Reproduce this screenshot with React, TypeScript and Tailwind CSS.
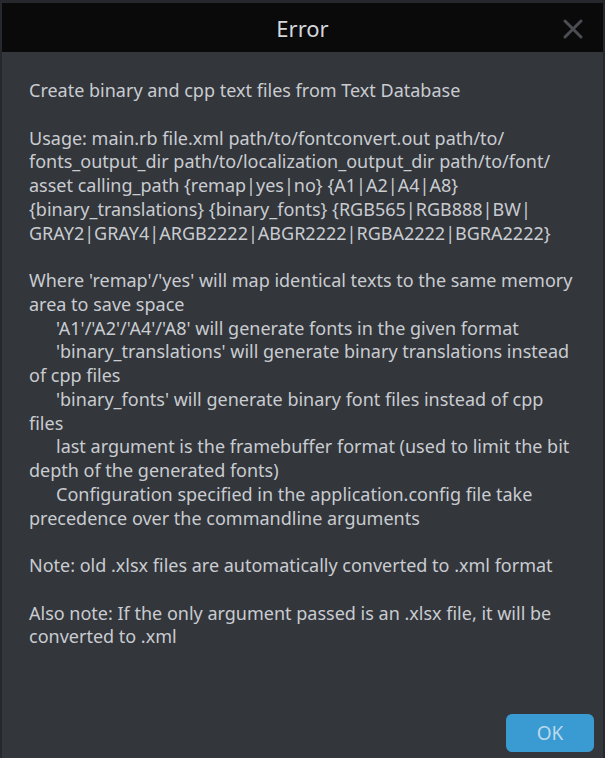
export default function App() {
  const indent = "indent-[27px]";
  return (
    <div className="w-[605px] h-[758px] bg-[#25282c] pt-[3px] px-[2px] font-['Noto_Sans',sans-serif]">
      <div className="h-[755px] flex flex-col bg-[#33363b]">
        {/* Title bar */}
        <div className="relative h-[49px] shrink-0 bg-[#0a0a0b] flex items-center justify-center">
          <span className="text-[22px] text-[#d4d7db] leading-none">Error</span>
          <svg
            className="absolute right-[19px] top-[15px]"
            width="22"
            height="22"
            viewBox="0 0 22 22"
          >
            <path d="M3 3 L19 19 M19 3 L3 19" stroke="#4a4d52" strokeWidth="3" strokeLinecap="round" />
          </svg>
        </div>

        {/* Body */}
        <div className="flex-1 pl-[27px] pr-[2px] pt-[27px] text-[18px] leading-[23.75px] text-[#c9ccd1]">
          <p>Create binary and cpp text files from Text Database</p>
          <p className="mt-[23.75px]">
            Usage: main.rb file.xml path/to/fontconvert.out path/to/
            <br />
            fonts_output_dir path/to/localization_output_dir path/to/font/
            <br />
            asset calling_path {"{remap|yes|no}"} {"{A1|A2|A4|A8}"}
            <br />
            {"{binary_translations} {binary_fonts} {RGB565|RGB888|BW|"}
            <br />
            {"GRAY2|GRAY4|ARGB2222|ABGR2222|RGBA2222|BGRA2222}"}
          </p>
          <p className="mt-[23.75px]">
            Where 'remap'/'yes' will map identical texts to the same memory
            <br />
            area to save space
          </p>
          <p className={indent}>'A1'/'A2'/'A4'/'A8' will generate fonts in the given format</p>
          <p className={indent}>
            'binary_translations' will generate binary translations instead
            <br />
            of cpp files
          </p>
          <p className={indent}>
            'binary_fonts' will generate binary font files instead of cpp
            <br />
            files
          </p>
          <p className={indent}>
            last argument is the framebuffer format (used to limit the bit
            <br />
            depth of the generated fonts)
          </p>
          <p className={indent}>
            Configuration specified in the application.config file take
            <br />
            precedence over the commandline arguments
          </p>
          <p className="mt-[23.75px]">Note: old .xlsx files are automatically converted to .xml format</p>
          <p className="mt-[23.75px]">
            Also note: If the only argument passed is an .xlsx file, it will be
            <br />
            converted to .xml
          </p>
        </div>

        {/* Footer */}
        <div className="flex justify-end pr-[9px] pb-[6px]">
          <button className="w-[88px] h-[38px] rounded-[6px] bg-[#3a9bd2] text-[19px] text-[#bcd9ec]">
            OK
          </button>
        </div>
      </div>
    </div>
  );
}
